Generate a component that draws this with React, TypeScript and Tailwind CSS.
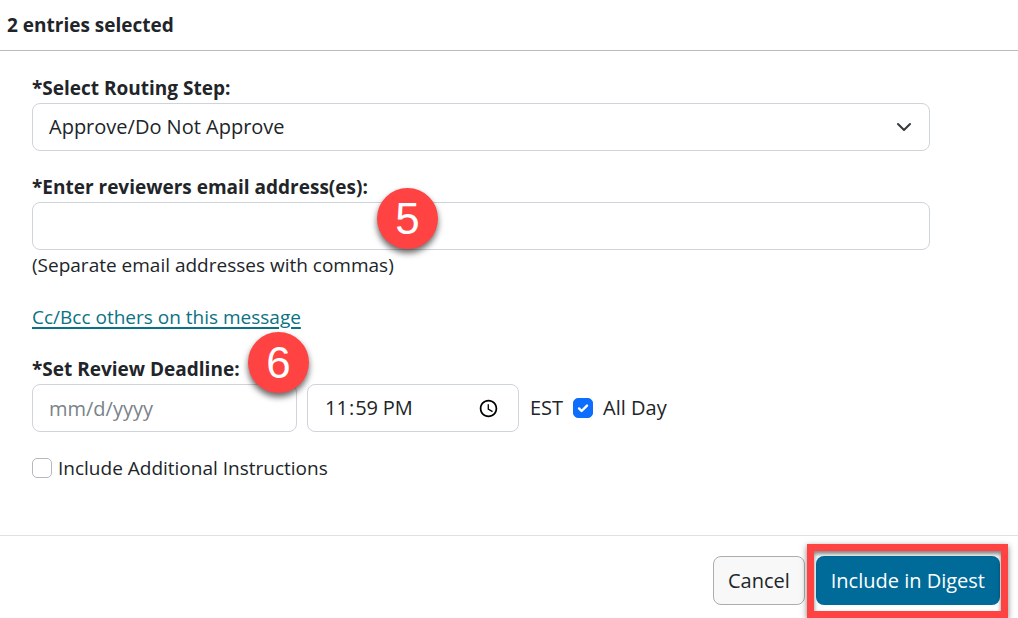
import { useState } from 'react';
import type { ReactNode } from 'react';

const routingSteps = ['Approve/Do Not Approve', 'Review Only', 'Acknowledge'];

const fieldClass =
  'block h-12 rounded-lg border border-[#ced4da] bg-white px-4 text-[20px] text-[#212529] placeholder:text-[#7b8289]';

interface CheckboxProps {
  id: string;
  checked: boolean;
  onChange: (checked: boolean) => void;
}

function Checkbox({ id, checked, onChange }: CheckboxProps) {
  return (
    <span className="relative flex shrink-0">
      <input
        id={id}
        type="checkbox"
        checked={checked}
        onChange={(e) => onChange(e.target.checked)}
        className="peer size-5 appearance-none rounded-[5px] border border-[#b5b9bd] bg-white checked:border-[#0d6efd] checked:bg-[#0d6efd]"
      />
      <svg
        className="pointer-events-none absolute inset-0 hidden size-5 peer-checked:block"
        viewBox="0 0 20 20"
        fill="none"
        stroke="#fff"
      >
        <path strokeLinecap="round" strokeLinejoin="round" strokeWidth={2.4} d="M6 10.4l2.6 2.6 5.4-5.4" />
      </svg>
    </span>
  );
}

function StepMarker({ children }: { children: ReactNode }) {
  return (
    <span className="flex size-[61px] items-center justify-center rounded-full bg-[#ff4343] font-['Liberation_Sans',sans-serif] text-[44px] leading-none font-normal text-white shadow-[0_4px_6px_rgba(0,0,0,0.6)]">
      {children}
    </span>
  );
}

export default function App() {
  const [step, setStep] = useState(routingSteps[0]);
  const [emails, setEmails] = useState('');
  const [date, setDate] = useState('');
  const [time, setTime] = useState('23:59');
  const [allDay, setAllDay] = useState(true);
  const [instructions, setInstructions] = useState(false);

  return (
    <form
      className="overflow-hidden bg-white font-['Open_Sans','Noto_Sans',sans-serif] text-[19px] leading-[30px] text-[#212529]"
      onSubmit={(e) => e.preventDefault()}
    >
      <header className="border-b border-[#b9bbbd] px-[7px] py-[10px]">
        <h1 className="font-bold">2 entries selected</h1>
      </header>

      <div className="pt-[22px] pr-[88px] pb-[52px] pl-8">
        <div className="mb-[21px]">
          <label htmlFor="routing-step" className="block font-bold">
            *Select Routing Step:
          </label>
          <div className="relative">
            <select
              id="routing-step"
              value={step}
              onChange={(e) => setStep(e.target.value)}
              className={`${fieldClass} w-full appearance-none`}
            >
              {routingSteps.map((name) => (
                <option key={name}>{name}</option>
              ))}
            </select>
            <svg
              className="pointer-events-none absolute top-4 right-[18px] size-4"
              viewBox="0 0 16 16"
              fill="none"
              stroke="#343a40"
            >
              <path strokeLinecap="round" strokeLinejoin="round" strokeWidth={2} d="M2 5l6 6 6-6" />
            </svg>
          </div>
        </div>

        <div className="relative mb-[22px]">
          <label htmlFor="emails" className="block font-bold">
            *Enter reviewers email address(es):
          </label>
          <input
            id="emails"
            type="text"
            value={emails}
            onChange={(e) => setEmails(e.target.value)}
            aria-describedby="emails-help"
            className={`${fieldClass} w-full`}
          />
          <p id="emails-help">(Separate email addresses with commas)</p>
          <div className="pointer-events-none absolute top-4 left-[345px]">
            <StepMarker>5</StepMarker>
          </div>
        </div>

        <a href="#cc" className="text-[#0b7285] underline decoration-2 underline-offset-3">
          Cc/Bcc others on this message
        </a>

        <div className="relative mt-[22px] mb-[21px]">
          <label htmlFor="deadline-date" className="block font-bold">
            *Set Review Deadline:
          </label>
          <div className="flex items-center">
            <input
              id="deadline-date"
              type="text"
              placeholder="mm/d/yyyy"
              value={date}
              onChange={(e) => setDate(e.target.value)}
              className={`${fieldClass} mr-[10px] w-[265px]`}
            />
            <input
              type="time"
              aria-label="Deadline time"
              value={time}
              onChange={(e) => setTime(e.target.value)}
              className={`${fieldClass} mr-[11px] w-[212px]`}
            />
            <div className="flex items-center gap-[10px] text-[20px]">
              <span>EST</span>
              <Checkbox id="all-day" checked={allDay} onChange={setAllDay} />
              <label htmlFor="all-day">All Day</label>
            </div>
          </div>
          <div className="pointer-events-none absolute -top-[22px] left-[216px]">
            <StepMarker>6</StepMarker>
          </div>
        </div>

        <div className="flex items-center gap-[6px]">
          <Checkbox id="instructions" checked={instructions} onChange={setInstructions} />
          <label htmlFor="instructions">Include Additional Instructions</label>
        </div>
      </div>

      <footer className="flex justify-end gap-[11px] border-t border-[#dee2e6] px-[18px] pt-5 pb-[13px] text-[20px]">
        <button type="button" className="h-[49px] rounded-lg border border-[#adadad] bg-[#f8f8f8] px-[14px]">
          Cancel
        </button>
        <div className="relative">
          <button type="submit" className="h-[49px] rounded-lg bg-[#006b99] px-[15px] text-white">
            Include in Digest
          </button>
          {/* Callout frame */}
          <div className="pointer-events-none absolute -top-3 -right-2 -bottom-[13px] -left-[9px] border-7 border-[#ff4343] shadow-[0_2px_6px_rgba(0,0,0,0.5),inset_0_3px_4px_rgba(0,0,0,0.5)]" />
        </div>
      </footer>
    </form>
  );
}
